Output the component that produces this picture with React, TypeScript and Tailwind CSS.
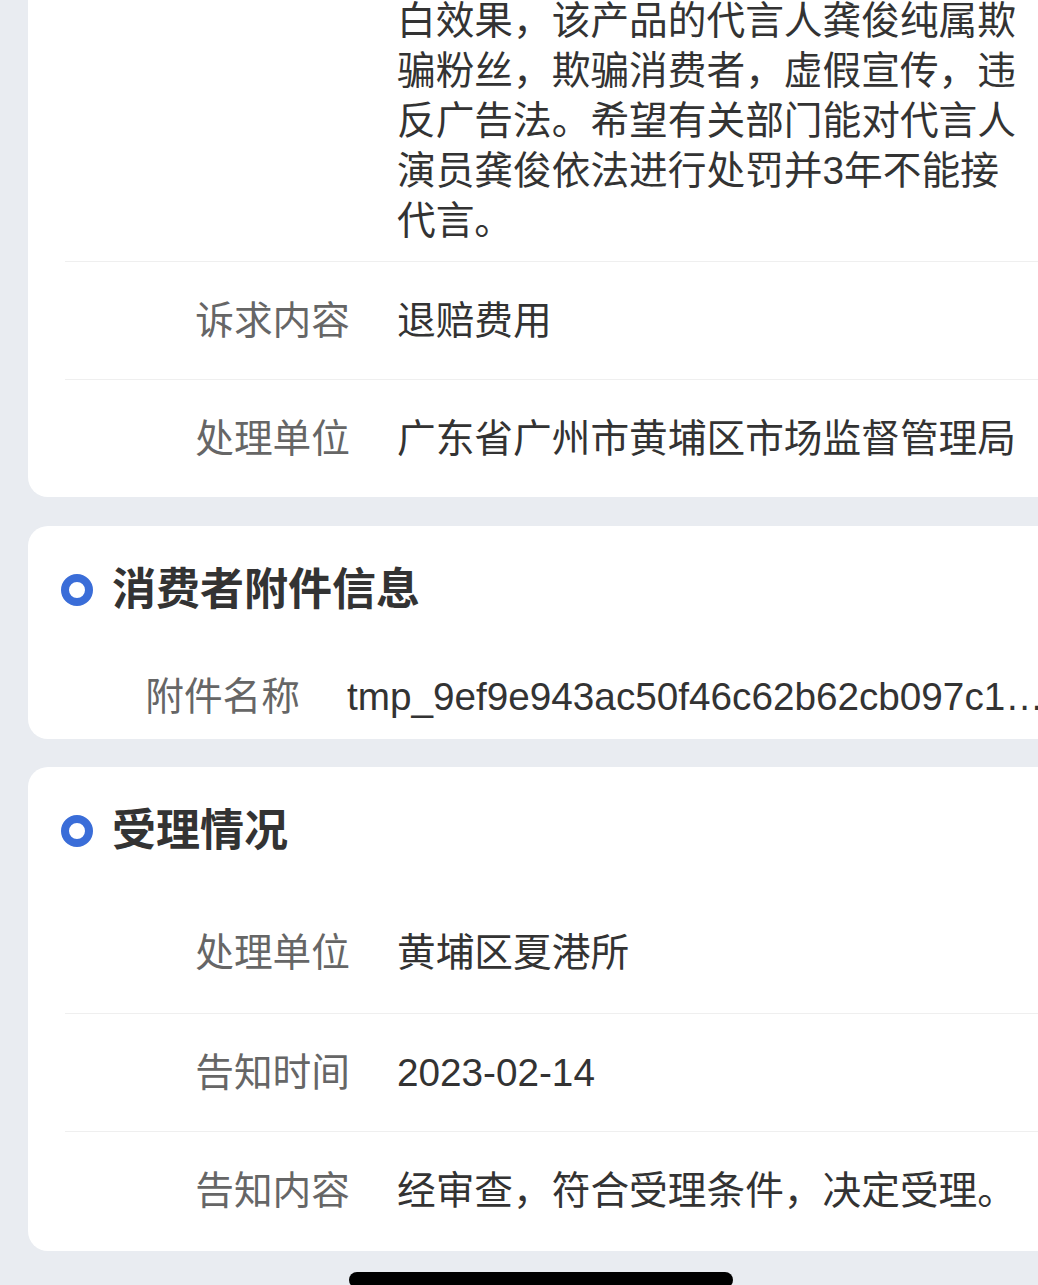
import React from 'react';

interface InfoRow {
  label: string;
  value: string;
}

const FONT = { fontFamily: '"Liberation Sans", "Noto Sans CJK SC", sans-serif' };

const complaintRows: InfoRow[] = [
  { label: '诉求内容', value: '退赔费用' },
  { label: '处理单位', value: '广东省广州市黄埔区市场监督管理局' },
];

const acceptRows: InfoRow[] = [
  { label: '处理单位', value: '黄埔区夏港所' },
  { label: '告知时间', value: '2023-02-14' },
  { label: '告知内容', value: '经审查，符合受理条件，决定受理。' },
];

function SectionTitle({ title }: { title: string }) {
  return (
    <div className="flex items-center pl-[33px] pt-[37px]">
      <div className="w-8 h-8 rounded-full border-[8px] border-[#3a6dd8] shrink-0" />
      <h2 className="ml-[19px] text-[44px] leading-[54px] font-bold text-[#333333]">{title}</h2>
    </div>
  );
}

function Row({ row, first }: { row: InfoRow; first?: boolean }) {
  return (
    <div
      className={`flex items-start text-[38.7px] leading-[49px] ${
        first ? 'pt-[35px] pb-[36px]' : 'border-t border-[#efefef] pt-[34px] pb-[34px]'
      }`}
    >
      <span className="w-[285px] shrink-0 text-right text-[#666666]">{row.label}</span>
      <span className="ml-[47px] text-[#333333] whitespace-nowrap">{row.value}</span>
    </div>
  );
}

export default function App() {
  return (
    <div className="w-[1038px] h-[1285px] overflow-hidden bg-[#e9ecf1] relative" style={FONT}>
      {/* 投诉信息 (continues from above) */}
      <div className="ml-[28px] w-[1040px] bg-white rounded-b-[20px] -mt-[4px]">
        <div className="ml-[37px]">
          <div className="flex items-start text-[38.7px] leading-[50px] pb-[15px]">
            <span className="w-[285px] shrink-0" />
            <p className="ml-[47px] w-[625px] text-[#333333]">
              白效果，该产品的代言人龚俊纯属欺骗粉丝，欺骗消费者，虚假宣传，违反广告法。希望有关部门能对代言人演员龚俊依法进行处罚并3年不能接代言。
            </p>
          </div>
          {complaintRows.map((row) => (
            <Row key={row.label} row={row} />
          ))}
        </div>
      </div>

      {/* 消费者附件信息 */}
      <div className="ml-[28px] mt-[29px] w-[1040px] bg-white rounded-[20px] pb-[18px]">
        <SectionTitle title="消费者附件信息" />
        <div className="ml-[37px] mt-[55px] flex items-start text-[38.7px] leading-[49px]">
          <span className="w-[235px] shrink-0 text-right text-[#666666]">附件名称</span>
          <span className="ml-[47px] w-[700px] overflow-hidden text-ellipsis whitespace-nowrap text-[#333333]">
            tmp_9ef9e943ac50f46c62b62cb097c1a8e5.jpg
          </span>
        </div>
      </div>

      {/* 受理情况 */}
      <div className="ml-[28px] mt-[28px] w-[1040px] bg-white rounded-[20px] pb-[2px]">
        <SectionTitle title="受理情况" />
        <div className="ml-[37px] mt-[35px]">
          {acceptRows.map((row, i) => (
            <Row key={row.label} row={row} first={i === 0} />
          ))}
        </div>
      </div>

      <div className="absolute left-[349px] top-[1272px] w-[384px] h-[16px] rounded-full bg-black" />
    </div>
  );
}
